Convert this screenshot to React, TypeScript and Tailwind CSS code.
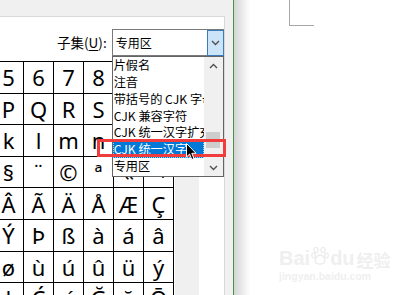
import React from "react";

const rows: string[][] = [
  ["5", "6", "7", "8", "9", ":"],
  ["P", "Q", "R", "S", "T", "U"],
  ["k", "l", "m", "n", "o", "p"],
  ["§", "¨", "©", "ª", "«", "¬"],
  ["Â", "Ã", "Ä", "Å", "Æ", "Ç"],
  ["Ý", "Þ", "ß", "à", "á", "â"],
  ["ø", "ù", "ú", "û", "ü", "ý"],
  ["ł", "Ć", "ć", "Ğ", "ğ", "Ō"],
];

const items = [
  "片假名",
  "注音",
  "带括号的 CJK 字母",
  "CJK 兼容字符",
  "CJK 统一汉字扩充",
  "CJK 统一汉字",
  "专用区",
];

const cjk = { fontFamily: '"Noto Sans CJK SC", "Noto Sans", sans-serif' };

function Chevron({ up = false }: { up?: boolean }) {
  return (
    <svg width="9" height="6" viewBox="0 0 9 6">
      <polyline
        points={up ? "1,5 4.5,1.5 8,5" : "1,1 4.5,4.5 8,1"}
        fill="none"
        stroke="#505050"
        strokeWidth="1.4"
      />
    </svg>
  );
}

export default function App() {
  return (
    <div className="relative w-[399px] h-[295px] overflow-hidden flex bg-white">
      {/* Dialog */}
      <div className="w-[233px] shrink-0 bg-[#f0f0f0] flex flex-col">
        <div className="h-[16px] shrink-0" />
        <div className="flex-1 w-[225px] bg-white border-t border-r border-[#d9d9d9] flex flex-col overflow-hidden">
          {/* Subset row */}
          <div className="flex items-center pl-[57px] pt-[12px] h-[39px]">
            <span className="text-[13.5px] leading-none text-black" style={cjk}>
              子集(<span className="underline underline-offset-2">U</span>):
            </span>
            <div className="relative ml-[5px] w-[112px] h-[27px] border border-[#7a7a7a] bg-white flex items-center">
              <span className="pl-[3px] text-[12px] leading-none text-black flex-1" style={cjk}>
                专用区
              </span>
              <div className="w-[17px] h-[26px] -mr-px bg-[#cce4f7] border border-[#3d7ab8] flex items-center justify-center">
                <Chevron />
              </div>
              {/* Dropdown list */}
              <div className="absolute left-[-1px] top-[26px] w-[112px] h-[121px] bg-white border border-[#646464] flex z-10">
                <div className="flex-1 flex flex-col overflow-hidden">
                  {items.map((t, i) => (
                    <div
                      key={t}
                      className={
                        "h-[16.8px] shrink-0 flex items-center pl-[1px] whitespace-nowrap text-[12.2px] leading-none " +
                        (i === 5
                          ? "bg-[#0078d7] text-white outline-1 outline-dotted outline-[#9fd0f5] -outline-offset-1"
                          : "text-black")
                      }
                      style={cjk}
                    >
                      {t}
                    </div>
                  ))}
                </div>
                <div className="w-[19px] bg-[#f0f0f0] flex flex-col items-center">
                  <div className="h-[17px] flex items-center justify-center">
                    <Chevron up />
                  </div>
                  <div className="flex-1 w-full flex flex-col items-center">
                    <div className="mt-[58px] w-[14px] h-[16px] bg-[#cdcdcd]" />
                  </div>
                  <div className="h-[17px] flex items-center justify-center">
                    <Chevron />
                  </div>
                </div>
              </div>
            </div>
          </div>
          {/* Character grid */}
          <div className="flex mt-[5px]">
            <div
              className="-ml-[7px] grid grid-cols-[repeat(6,29px)] grid-rows-[repeat(8,30.6px)] gap-px bg-black p-px"
              style={{ fontFamily: '"Noto Sans", "Open Sans", sans-serif' }}
            >
              {rows.flat().map((c, i) => (
                <div
                  key={i}
                  className="bg-white flex items-center justify-center text-[22px] leading-none text-black"
                >
                  {c}
                </div>
              ))}
            </div>
            <div className="ml-[1px] w-[24px] bg-[#f0f0f0]" />
          </div>
        </div>
      </div>
      {/* Green window border */}
      <div className="w-px shrink-0 bg-[#4a8f4a]" />
      {/* Document area */}
      <div className="flex-1 flex relative">
        <div className="w-[16px] shrink-0 bg-linear-to-r from-[#d4d4d4] to-white" />
        <div className="flex-1">
          <div className="ml-[39px] w-[25px] h-[26px] border-l border-b border-[#a6a6a6]" />
        </div>
        {/* Watermark */}
        <div className="absolute left-[45px] top-[246px] flex flex-col items-start text-[#efefef] select-none">
          <div className="flex items-end leading-none">
            <span className="text-[20px] font-bold" style={{ fontFamily: '"Liberation Sans", sans-serif' }}>
              Bai
            </span>
            <svg width="18" height="20" viewBox="0 0 18 20" className="mx-[1px] mb-[2px]">
              <g fill="none" stroke="#ececec" strokeWidth="1.3">
                <ellipse cx="5" cy="4" rx="2" ry="2.6" />
                <ellipse cx="12" cy="4" rx="2" ry="2.6" />
                <ellipse cx="2.5" cy="9.5" rx="1.8" ry="2.3" />
                <ellipse cx="15.5" cy="9.5" rx="1.8" ry="2.3" />
                <path d="M9 9 C5 9 3 15 5 17 C7 18.5 11 18.5 13 17 C15 15 13 9 9 9 Z" />
              </g>
            </svg>
            <span className="text-[20px] font-bold" style={{ fontFamily: '"Liberation Sans", sans-serif' }}>
              du
            </span>
            <span className="ml-[2px] text-[17px] font-bold" style={cjk}>
              经验
            </span>
          </div>
          <span className="text-[10.5px] font-bold leading-none mt-[3px]" style={{ fontFamily: '"Liberation Sans", sans-serif' }}>
            jingyan.baidu.com
          </span>
        </div>
      </div>

      {/* Red annotation rectangle */}
      <div className="absolute left-[97px] top-[139px] w-[129px] h-[18px] border-[3px] border-[#f03c3c] z-20" />

      {/* Mouse cursor */}
      <svg
        className="absolute left-[186px] top-[143px] z-30"
        width="12"
        height="18"
        viewBox="0 0 12 18"
      >
        <path
          d="M0.5 0.5 L0.5 14 L3.6 11 L5.8 16.5 L8 15.6 L5.8 10.3 L10 10.3 Z"
          fill="#000"
          stroke="#fff"
          strokeWidth="1"
          strokeLinejoin="round"
        />
      </svg>
    </div>
  );
}
